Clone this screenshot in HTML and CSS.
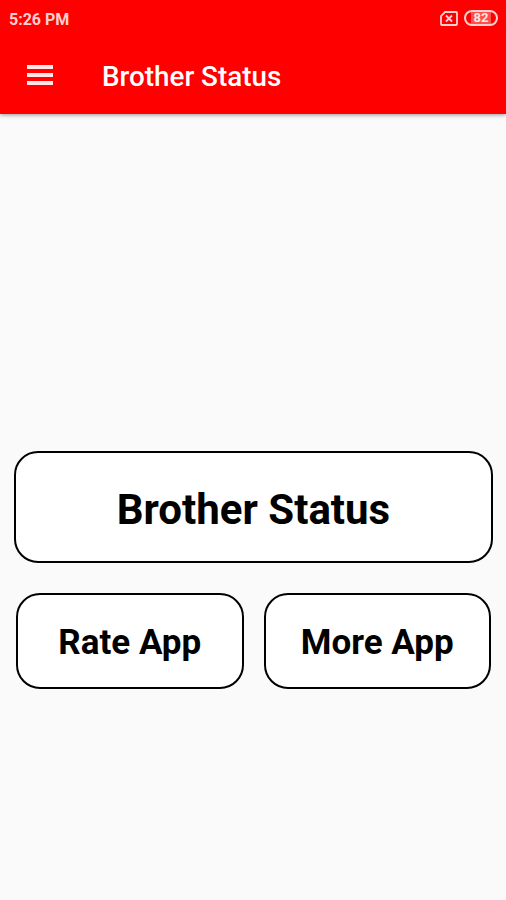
FILE: index.html
```html
<!DOCTYPE html>
<html lang="en">
<head>
    <meta charset="UTF-8">
    <meta name="viewport" content="width=device-width, initial-scale=1.0">
    <title>Brother Status</title>
    <link rel="stylesheet" href="styles.css">
</head>
<body>
    <header class="app-header">
        <div class="status-bar">
            <span class="time">5:26 PM</span>
            <div class="status-icons">
                <svg class="sim-icon" width="18" height="15" viewBox="0 0 18 15">
                    <path d="M5 1h11a1 1 0 0 1 1 1v11a1 1 0 0 1-1 1H2a1 1 0 0 1-1-1V5z"/>
                    <path d="M6 4.5l6 6M12 4.5l-6 6"/>
                </svg>
                <div class="battery"><span class="battery-level">82</span></div>
            </div>
        </div>
        <div class="toolbar">
            <button class="menu-button" aria-label="Menu">
                <svg width="26" height="20" viewBox="0 0 26 20">
                    <path d="M0 2h26M0 10h26M0 18h26"/>
                </svg>
            </button>
            <h1 class="title">Brother Status</h1>
        </div>
    </header>

    <main class="home">
        <button class="card card-large">Brother Status</button>
        <div class="card-row">
            <button class="card">Rate App</button>
            <button class="card">More App</button>
        </div>
    </main>
</body>
</html>
```
FILE: styles.css
```css
body {
    margin: 0;
    height: 900px;
    background-color: #fafafa;
    font-family: Roboto, "Liberation Sans", sans-serif;
    overflow: hidden;
}
button {
    font-family: inherit;
    padding: 0;
}
.app-header {
    height: 114px;
    background-color: #ff0000;
    color: #ffffff;
    box-shadow: 0 1px 4px rgba(0,0,0,0.4);
}
.status-bar {
    display: flex;
    align-items: center;
    justify-content: space-between;
    height: 37px;
    padding: 0 8px 0 9px;
    box-sizing: border-box;
    color: #ffd0d0;
}
.time {
    padding-top: 1px;
    font-size: 16px;
    font-weight: 700;
}
.status-icons {
    display: flex;
    align-items: center;
    gap: 6px;
    padding-bottom: 1px;
}
.sim-icon {
    fill: none;
    stroke: #ffd0d0;
    stroke-width: 1.8;
}
.battery {
    display: flex;
    align-items: center;
    justify-content: center;
    width: 34px;
    height: 16px;
    border: 2px solid #ffd0d0;
    border-radius: 8px;
    box-sizing: border-box;
    background: linear-gradient(to right, #ff0000 5px, #ff5050 5px, #ff5050 25px, #ff0000 25px);
}
.battery-level {
    color: #ffe6e6;
    font-size: 13px;
    font-weight: 700;
    line-height: 12px;
}
.toolbar {
    display: flex;
    align-items: center;
    height: 77px;
    padding-left: 27px;
}
.menu-button {
    width: 26px;
    height: 20px;
    margin-bottom: 2px;
    border: none;
    background: none;
}
.menu-button svg {
    display: block;
    stroke: #ffe6e6;
    stroke-width: 4;
}
.title {
    margin: 2px 0 0 49px;
    font-size: 27.8px;
    font-weight: 500;
}
.home {
    padding: 337px 13px 0 14px;
}
.card {
    flex: 1;
    height: 96px;
    padding-top: 3px;
    border: 2px solid #000000;
    border-radius: 24px;
    background-color: #ffffff;
    color: #000000;
    font-size: 35px;
    font-weight: 700;
}
.card-large {
    display: block;
    width: 100%;
    height: 112px;
    padding-top: 5px;
    font-size: 42px;
}
.card-row {
    display: flex;
    gap: 20px;
    padding: 30px 2px 0 2px;
}
```
